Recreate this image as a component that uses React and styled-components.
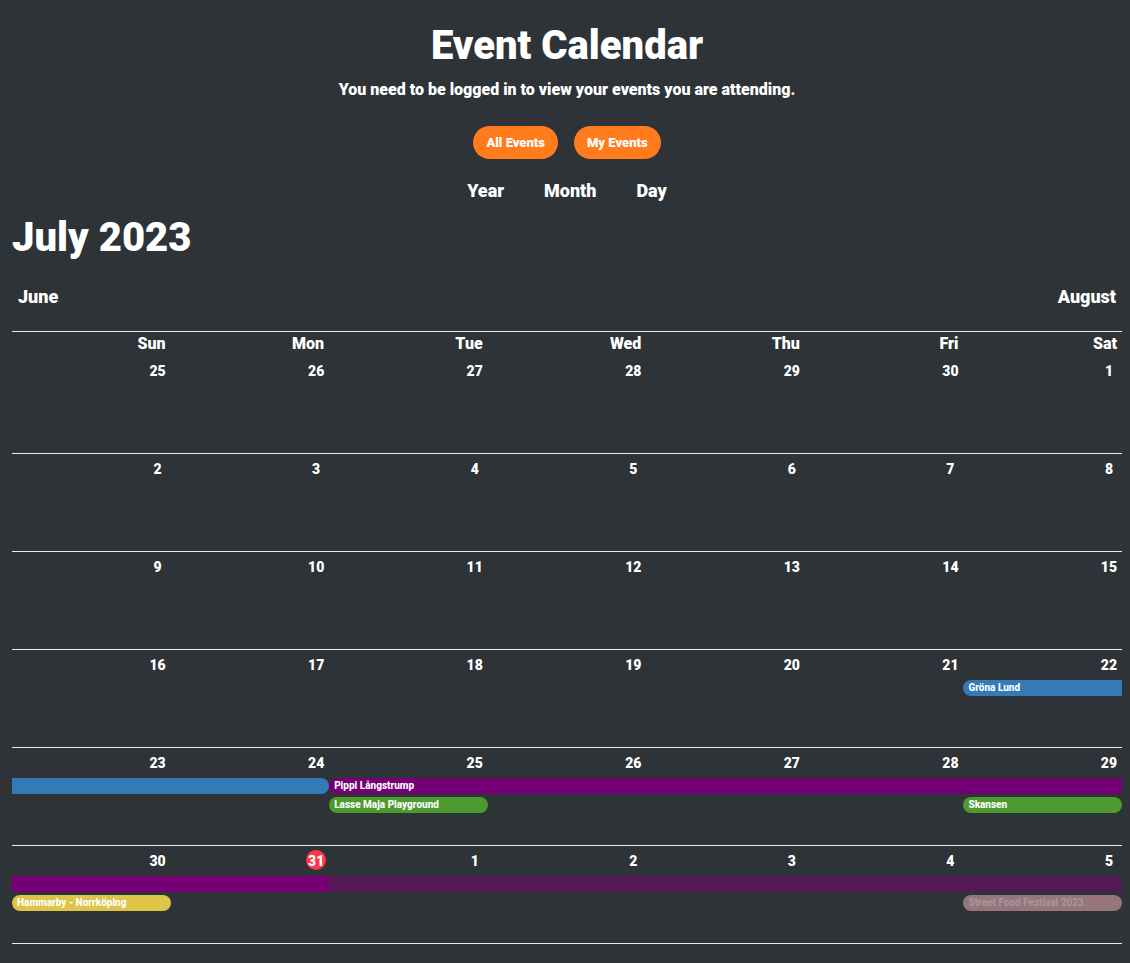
import React from 'react';
import styled, { createGlobalStyle } from 'styled-components';

const GlobalStyle = createGlobalStyle`
  * { box-sizing: border-box; }
  body {
    margin: 0;
    background: #2e3337;
    color: #fff;
    font-family: Roboto, sans-serif;
    font-weight: 900;
  }
  button { font: inherit; color: inherit; border: 0; padding: 0; background: none; cursor: pointer; }
`;

const Page = styled.main`
  padding: 21px 8px 18px 12px;
`;

const Header = styled.header`
  display: flex;
  flex-direction: column;
  align-items: center;
`;

const Title = styled.h1`
  margin: 0;
  font-size: 40px;
  line-height: 50px;
  font-weight: 900;
`;

const Notice = styled.p`
  margin: 9px 0 0;
  font-size: 16px;
  line-height: 20px;
`;

const Filters = styled.div`
  display: flex;
  gap: 16px;
  margin-top: 26px;
`;

const Pill = styled.button`
  && {
    height: 33px;
    padding: 0 13px;
    border-radius: 17px;
    background: #ff7b1c;
    font-size: 13px;
  }
`;

const Views = styled.nav`
  display: flex;
  gap: 40px;
  margin-top: 20px;
`;

const TextButton = styled.button`
  && {
    font-size: 18px;
    line-height: 24px;
  }
`;

const MonthTitle = styled.h2`
  margin: 10px 0 0;
  font-size: 40px;
  line-height: 50px;
  font-weight: 900;
`;

const MonthNav = styled.nav`
  display: flex;
  justify-content: space-between;
  margin-top: 22px;
  padding: 0 6px;
`;

const Calendar = styled.section`
  margin-top: 22px;
  border-top: 1px solid #e9ecef;
`;

const Weekdays = styled.div`
  display: grid;
  grid-template-columns: repeat(7, 1fr);
  height: 24px;
`;

const Weekday = styled.div`
  padding-right: 5px;
  text-align: right;
  font-size: 16px;
  line-height: 24px;
`;

const Week = styled.div`
  display: grid;
  grid-template-columns: repeat(7, 1fr);
  grid-template-rows: 27px 16px 16px;
  row-gap: 3px;
  height: 98px;
  border-bottom: 1px solid #e9ecef;
`;

const Day = styled.div`
  grid-row: 1;
  grid-column: ${(p) => p.$col};
  display: flex;
  justify-content: flex-end;
  padding: 4px 3px 0 0;
`;

const DayNumber = styled.time`
  width: 20px;
  height: 20px;
  border-radius: 50%;
  background: ${(p) => (p.$today ? '#ff3748' : 'transparent')};
  text-align: center;
  font-size: 14px;
  line-height: 22px;
`;

const Event = styled.button`
  && {
    grid-row: ${(p) => p.$row};
    grid-column: ${(p) => p.$from} / span ${(p) => p.$span};
    height: 16px;
    padding: 0 5px;
    border-radius: ${(p) => (p.$start ? '8px' : '0')} ${(p) => (p.$end ? '8px 8px' : '0 0')} ${(p) => (p.$start ? '8px' : '0')};
    background: ${(p) => p.$color};
    opacity: ${(p) => (p.$faded ? 0.5 : 1)};
    color: ${(p) => p.$ink || '#fff'};
    text-align: left;
    font-size: 10px;
    font-weight: 800;
    line-height: 16px;
    white-space: nowrap;
    overflow: hidden;
  }
`;

const weekdays = ['Sun', 'Mon', 'Tue', 'Wed', 'Thu', 'Fri', 'Sat'];

const weeks = [
  { days: [25, 26, 27, 28, 29, 30, 1], events: [] },
  { days: [2, 3, 4, 5, 6, 7, 8], events: [] },
  { days: [9, 10, 11, 12, 13, 14, 15], events: [] },
  {
    days: [16, 17, 18, 19, 20, 21, 22],
    events: [{ name: 'Gröna Lund', row: 2, from: 7, span: 1, color: '#337ab7', start: true }],
  },
  {
    days: [23, 24, 25, 26, 27, 28, 29],
    events: [
      { name: '', label: 'Gröna Lund', row: 2, from: 1, span: 2, color: '#337ab7', end: true },
      { name: 'Pippi Långstrump', row: 2, from: 3, span: 5, color: '#750075', start: true },
      { name: 'Lasse Maja Playground', row: 3, from: 3, span: 1, color: '#4d9b2f', start: true, end: true },
      { name: 'Skansen', row: 3, from: 7, span: 1, color: '#4d9b2f', start: true, end: true },
    ],
  },
  {
    days: [30, 31, 1, 2, 3, 4, 5],
    today: 31,
    events: [
      { name: '', label: 'Pippi Långstrump', row: 2, from: 1, span: 2, color: '#750075' },
      { name: '', label: 'Pippi Långstrump', row: 2, from: 3, span: 5, color: '#750075', faded: true },
      { name: 'Hammarby - Norrköping', row: 3, from: 1, span: 1, color: '#dcc548', start: true, end: true },
      { name: 'Street Food Festival 2023', row: 3, from: 7, span: 1, color: '#97757c', ink: '#a2989b', start: true, end: true },
    ],
  },
];

export default function App() {
  return (
    <>
      <GlobalStyle />
      <Page>
        <Header>
          <Title>Event Calendar</Title>
          <Notice>You need to be logged in to view your events you are attending.</Notice>
          <Filters>
            <Pill type="button">All Events</Pill>
            <Pill type="button">My Events</Pill>
          </Filters>
          <Views>
            {['Year', 'Month', 'Day'].map((v) => (
              <TextButton type="button" key={v}>{v}</TextButton>
            ))}
          </Views>
        </Header>
        <MonthTitle>July 2023</MonthTitle>
        <MonthNav>
          <TextButton type="button">June</TextButton>
          <TextButton type="button">August</TextButton>
        </MonthNav>
        <Calendar>
          <Weekdays>
            {weekdays.map((d) => <Weekday key={d}>{d}</Weekday>)}
          </Weekdays>
          {weeks.map((week, i) => (
            <Week key={i}>
              {week.days.map((d, col) => (
                <Day key={d} $col={col + 1}>
                  <DayNumber $today={week.today === d}>{d}</DayNumber>
                </Day>
              ))}
              {week.events.map((e, j) => (
                <Event
                  key={j}
                  type="button"
                  aria-label={e.label}
                  $row={e.row}
                  $from={e.from}
                  $span={e.span}
                  $color={e.color}
                  $ink={e.ink}
                  $start={e.start}
                  $end={e.end}
                  $faded={e.faded}
                >
                  {e.name}
                </Event>
              ))}
            </Week>
          ))}
        </Calendar>
      </Page>
    </>
  );
}
